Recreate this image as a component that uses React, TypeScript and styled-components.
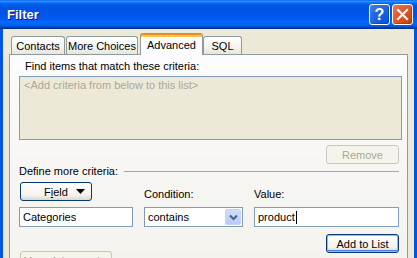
import React from "react";
import styled, { createGlobalStyle } from "styled-components";

const GlobalStyle = createGlobalStyle`
  html, body { margin: 0; padding: 0; background: #ece9d8; }
  body { font-family: "Liberation Sans", Arial, sans-serif; font-size: 11px; color: #000; }
`;

const Window = styled.div`
  width: 417px;
  height: 258px;
  display: flex;
  flex-direction: column;
  overflow: hidden;
`;

const TitleBar = styled.div`
  height: 29px;
  flex: none;
  display: flex;
  align-items: center;
  padding: 0 4px 0 7px;
  gap: 2px;
  background: linear-gradient(#0058ee 0%, #3593ff 4%, #288eff 6%, #127dff 8%, #036ffc 10%, #0262ee 14%, #0057e5 20%, #0054e3 24%, #0055eb 56%, #005bf5 66%, #026afe 76%, #0062ef 86%, #0052d6 92%, #0040ab 94%, #003092 100%);
`;

const Title = styled.div`
  flex: 1;
  color: #fff;
  font-weight: bold;
  font-size: 13px;
  text-shadow: 1px 1px #0f1089;
`;

const CaptionButton = styled.div<{ $close?: boolean }>`
  width: 21px;
  height: 21px;
  box-sizing: border-box;
  border: 1px solid #fff;
  border-radius: 3px;
  display: flex;
  align-items: center;
  justify-content: center;
  color: #fff;
  font-weight: bold;
  font-size: 16px;
  background: ${(p) =>
    p.$close
      ? "radial-gradient(circle at 90% 90%, #cc4600 0%, #e0532b 55%, #e8805a 100%)"
      : "radial-gradient(circle at 90% 90%, #0054e9 0%, #2263d5 55%, #4482ef 100%)"};
  box-shadow: inset -1px -1px rgba(0, 0, 0, 0.2);
`;

const Body = styled.div`
  flex: 1;
  display: flex;
  flex-direction: column;
  padding: 4px 6px 0 6px;
  border-left: 3px solid #0055e5;
  border-right: 3px solid #0055e5;
  background: #ece9d8;
`;

const TabRow = styled.div`
  height: 21px;
  display: flex;
  align-items: flex-end;
  padding-left: 2px;
`;

const Tab = styled.div<{ $width: number; $gap?: number; $active?: boolean }>`
  box-sizing: border-box;
  width: ${(p) => p.$width}px;
  margin-left: ${(p) => p.$gap ?? 0}px;
  height: ${(p) => (p.$active ? 22 : 18)}px;
  margin-bottom: ${(p) => (p.$active ? -1 : 0)}px;
  position: relative;
  z-index: ${(p) => (p.$active ? 2 : 1)};
  border: 1px solid #919b9c;
  border-bottom: none;
  border-radius: 3px 3px 0 0;
  display: flex;
  align-items: center;
  justify-content: center;
  white-space: nowrap;
  padding-top: ${(p) => (p.$active ? 1 : 1)}px;
  background: ${(p) =>
    p.$active
      ? "linear-gradient(#e68b2c 0 1px, #ffc83c 1px 3px, #fcfcfe 3px)"
      : "linear-gradient(#ffffff, #f3f3ef 60%, #e6e5dd)"};
  border-top-color: ${(p) => (p.$active ? "#e68b2c" : "#919b9c")};
`;

const Panel = styled.div`
  flex: 1;
  display: flex;
  flex-direction: column;
  border: 1px solid #919b9c;
  border-bottom: none;
  padding: 0 5px 0 9px;
  background: linear-gradient(#fcfcfe, #f7f5f2 60%, #f4f3ee);
`;

const Caption = styled.div`
  margin: 5px 0 3px 6px;
  line-height: 13px;
`;

const ListBox = styled.div`
  height: 64px;
  box-sizing: border-box;
  border: 1px solid #7f9db9;
  background: #ece9d8;
  color: #aca899;
  padding: 2px 4px;
  line-height: 13px;
`;

const ButtonRow = styled.div<{ $top: number }>`
  display: flex;
  justify-content: flex-end;
  margin-top: ${(p) => p.$top}px;
  padding-right: 3px;
`;

const PushButton = styled.div<{ $width: number; $disabled?: boolean; $default?: boolean }>`
  width: ${(p) => p.$width}px;
  height: 19px;
  box-sizing: border-box;
  border: 1px solid ${(p) => (p.$disabled ? "#c9c7ba" : "#003c74")};
  border-radius: 3px;
  display: flex;
  align-items: center;
  justify-content: center;
  white-space: nowrap;
  overflow: hidden;
  color: ${(p) => (p.$disabled ? "#aca899" : "#000")};
  background: ${(p) => (p.$disabled ? "#f5f4ea" : "linear-gradient(#ffffff, #f4f3ee 70%, #dcd8cc)")};
  box-shadow: ${(p) => (p.$default ? "inset 0 0 0 1px #98b8ea, inset 0 -1px 0 1px #4b7ee0" : "none")};
`;

const GroupHead = styled.div`
  display: flex;
  align-items: center;
  gap: 6px;
  height: 14px;
  padding-right: 3px;
  line-height: 14px;
`;

const Rule = styled.div`
  flex: 1;
  height: 1px;
  background: #aaa898;
  margin-top: 1px;
`;

const CriteriaGrid = styled.div`
  display: grid;
  grid-template-columns: 114px 99px 145px;
  column-gap: 11px;
  row-gap: 6px;
  margin-top: 4px;
  align-items: end;
`;

const FieldButton = styled(PushButton)`
  margin-left: 1px;
  justify-content: space-between;
  padding: 0 6px 0 23px;
`;

const FieldLabel = styled.div`
  line-height: 13px;
`;

const TextBox = styled.div`
  height: 20px;
  box-sizing: border-box;
  border: 1px solid #7f9db9;
  background: #fff;
  display: flex;
  align-items: center;
  padding-left: 3px;
`;

const Caret = styled.span`
  display: inline-block;
  width: 1px;
  height: 13px;
  background: #000;
  margin-left: 1px;
`;

const DropArrow = styled.div`
  margin-left: auto;
  margin-right: 1px;
  width: 16px;
  height: 16px;
  box-sizing: border-box;
  border: 1px solid #c3d3fd;
  border-radius: 2px;
  background: linear-gradient(#d0ddfb, #b6cbf8);
  display: flex;
  align-items: center;
  justify-content: center;
`;

const BottomRow = styled.div`
  display: flex;
  margin-top: -2px;
  padding-left: 1px;
`;

export default function App() {
  return (
    <>
      <GlobalStyle />
      <Window>
        <TitleBar>
          <Title>Filter</Title>
          <CaptionButton>?</CaptionButton>
          <CaptionButton $close>
            <svg width="13" height="13" viewBox="0 0 13 13">
              <path d="M2 2 L11 11 M11 2 L2 11" stroke="#fff" strokeWidth="2.2" strokeLinecap="square" />
            </svg>
          </CaptionButton>
        </TitleBar>
        <Body>
          <TabRow>
            <Tab $width={54}>Contacts</Tab>
            <Tab $width={72} $gap={1}>More Choices</Tab>
            <Tab $width={63} $gap={2} $active>Advanced</Tab>
            <Tab $width={39}>SQL</Tab>
          </TabRow>
          <Panel>
            <Caption>Find items that match these criteria:</Caption>
            <ListBox>&lt;Add criteria from below to this list&gt;</ListBox>
            <ButtonRow $top={5}>
              <PushButton $width={73} $disabled>Remove</PushButton>
            </ButtonRow>
            <GroupHead>
              <span>Define more criteria:</span>
              <Rule />
            </GroupHead>
            <CriteriaGrid>
              <FieldButton $width={72}>
                <span>
                  F<u>i</u>eld
                </span>
                <svg width="9" height="5" viewBox="0 0 9 5">
                  <polygon points="0,0 9,0 4.5,5" fill="#000" />
                </svg>
              </FieldButton>
              <FieldLabel>Condition:</FieldLabel>
              <FieldLabel>Value:</FieldLabel>
              <TextBox>Categories</TextBox>
              <TextBox>
                contains
                <DropArrow>
                  <svg width="9" height="7" viewBox="0 0 9 7">
                    <polyline points="1,1.5 4.5,5 8,1.5" fill="none" stroke="#4d6185" strokeWidth="2" />
                  </svg>
                </DropArrow>
              </TextBox>
              <TextBox>
                product
                <Caret />
              </TextBox>
            </CriteriaGrid>
            <ButtonRow $top={7}>
              <PushButton $width={73} $default>Add to List</PushButton>
            </ButtonRow>
            <BottomRow>
              <PushButton $width={92} $disabled>More Advanced...</PushButton>
            </BottomRow>
          </Panel>
        </Body>
      </Window>
    </>
  );
}
